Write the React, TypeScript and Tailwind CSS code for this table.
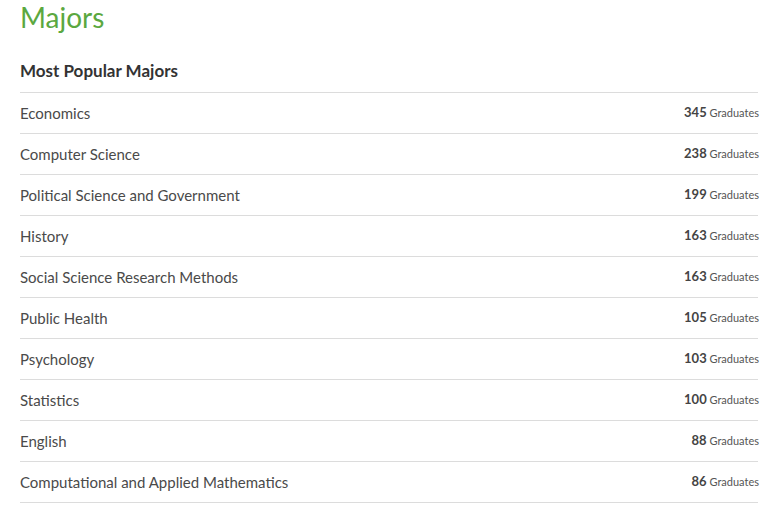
const majors = [
  { name: 'Economics', count: 345 },
  { name: 'Computer Science', count: 238 },
  { name: 'Political Science and Government', count: 199 },
  { name: 'History', count: 163 },
  { name: 'Social Science Research Methods', count: 163 },
  { name: 'Public Health', count: 105 },
  { name: 'Psychology', count: 103 },
  { name: 'Statistics', count: 100 },
  { name: 'English', count: 88 },
  { name: 'Computational and Applied Mathematics', count: 86 },
];

export default function App() {
  return (
    <div className="bg-white w-[778px] h-[509px] overflow-hidden px-5 font-['Lato','Liberation_Sans',sans-serif] text-[#444]">
      <h2 className="text-[28px] leading-[36px] text-[#5ba840] -mt-[1px]">Majors</h2>
      <h3 className="mt-[26px] text-[17px] leading-[20px] font-bold text-[#333] pb-[11px] border-b border-[#dcdcdc]">
        Most Popular Majors
      </h3>
      <ul>
        {majors.map((m) => (
          <li key={m.name} className="flex items-center justify-between h-[41px] border-b border-[#dcdcdc]">
            <span className="text-[15px] text-[#4a4a4a]">{m.name}</span>
            <span className="text-[11px] text-[#555] -mr-[1px]">
              <span className="text-[13px] font-bold text-[#444]">{m.count}</span> Graduates
            </span>
          </li>
        ))}
      </ul>
    </div>
  );
}
